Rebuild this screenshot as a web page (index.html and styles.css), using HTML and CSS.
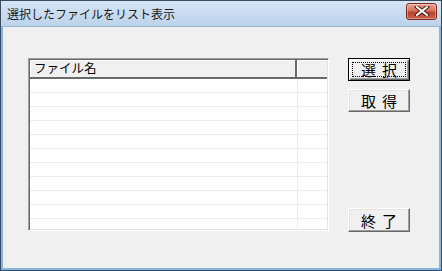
FILE: index.html
```html
<!DOCTYPE html>
<html lang="ja">
<head>
    <meta charset="UTF-8">
    <title>選択したファイルをリスト表示</title>
    <link rel="stylesheet" href="styles.css">
</head>
<body>
    <div class="window">
        <div class="titlebar">
            <span class="title">選択したファイルをリスト表示</span>
            <button class="close" aria-label="閉じる">
                <svg width="16" height="10" viewBox="0 0 16 10">
                    <path d="M3 1 L13 9 M13 1 L3 9" stroke="#4a1a12" stroke-width="4" stroke-linecap="square"/>
                    <path d="M3 1 L13 9 M13 1 L3 9" stroke="#fff" stroke-width="2" stroke-linecap="square"/>
                </svg>
            </button>
        </div>

        <div class="client">
            <div class="list">
                <div class="list-head">
                    <div class="head-cell name">ファイル名</div>
                    <div class="head-cell extra"></div>
                </div>
                <div class="list-body">
                    <div class="row"><div class="cell name"></div><div class="cell extra"></div></div>
                    <div class="row"><div class="cell name"></div><div class="cell extra"></div></div>
                    <div class="row"><div class="cell name"></div><div class="cell extra"></div></div>
                    <div class="row"><div class="cell name"></div><div class="cell extra"></div></div>
                    <div class="row"><div class="cell name"></div><div class="cell extra"></div></div>
                    <div class="row"><div class="cell name"></div><div class="cell extra"></div></div>
                    <div class="row"><div class="cell name"></div><div class="cell extra"></div></div>
                    <div class="row"><div class="cell name"></div><div class="cell extra"></div></div>
                    <div class="row"><div class="cell name"></div><div class="cell extra"></div></div>
                    <div class="row"><div class="cell name"></div><div class="cell extra"></div></div>
                    <div class="row"><div class="cell name"></div><div class="cell extra"></div></div>
                    <div class="row"><div class="cell name"></div><div class="cell extra"></div></div>
                </div>
            </div>

            <div class="buttons">
                <button class="btn default"><span class="label focus"><span>選</span><span>択</span></span></button>
                <button class="btn"><span class="label"><span>取</span><span>得</span></span></button>
                <div class="spacer"></div>
                <button class="btn last"><span class="label"><span>終</span><span>了</span></span></button>
            </div>
        </div>
    </div>
</body>
</html>
```

FILE: styles.css
```css
body {
    margin: 0;
    font-family: "Noto Sans CJK JP", "Noto Sans", sans-serif;
    background: #f0f0f0;
}

.window {
    width: 442px;
    height: 271px;
    box-sizing: border-box;
    border: 1px solid #3a4b60;
    background: #86b5e2;
    padding: 0 2px 2px 2px;
    display: flex;
    flex-direction: column;
}

.titlebar {
    height: 25px;
    flex: none;
    display: flex;
    align-items: center;
    justify-content: space-between;
    margin: 0 -2px;
    padding: 0 4px 0 6px;
    background: linear-gradient(#d6e4f4, #bcd3ec);
    border-bottom: 1px solid #98b4d6;
}

.title {
    font-size: 12px;
    color: #1a1a1a;
}

.close {
    width: 31px;
    height: 17px;
    margin-top: -5px;
    padding: 0;
    border: 1px solid #7c2a1f;
    border-radius: 3px;
    background: linear-gradient(#e8a493, #d5735f 45%, #b8432e 55%, #c9604b);
    box-shadow: inset 0 0 0 1px rgba(255, 255, 255, 0.35);
    display: flex;
    align-items: center;
    justify-content: center;
}

.client {
    flex: 1;
    background: #f0f0f0;
    display: flex;
    padding: 31px 0 0 25px;
}

.list {
    width: 301px;
    height: 173px;
    box-sizing: border-box;
    border: 1px solid;
    border-color: #a0a0a0 #ffffff #ffffff #a0a0a0;
    box-shadow: inset 1px 1px #696969, inset -1px -1px #e3e3e3;
    background: #fff;
    padding: 1px;
    overflow: hidden;
}

.list-head {
    display: flex;
    height: 17px;
    background: #f0f0f0;
    border-bottom: 2px solid #6a6a6a;
}

.head-cell {
    box-sizing: border-box;
    border-right: 2px solid #6a6a6a;
    box-shadow: inset 1px 1px #fff;
    font-size: 12.5px;
    line-height: 16px;
    padding-left: 4px;
    color: #000;
}

.name {
    width: 267px;
}

.head-cell.extra {
    flex: 1;
    border-right: none;
}

.row {
    display: flex;
    height: 13px;
    border-bottom: 1px solid #ececec;
}

.cell.name {
    border-right: 1px solid #ececec;
}

.buttons {
    margin-left: 19px;
    width: 62px;
    height: 174px;
    display: flex;
    flex-direction: column;
}

.btn {
    width: 62px;
    height: 23px;
    flex: none;
    padding: 0;
    font-family: "Noto Sans CJK JP", sans-serif;
    font-size: 15px;
    color: #000;
    background: #f0f0f0;
    border: 1px solid;
    border-color: #fff #696969 #696969 #fff;
    box-shadow: inset -1px -1px #a0a0a0, inset 1px 1px #e3e3e3;
    margin-bottom: 8px;
}

.label {
    display: flex;
    justify-content: center;
    align-items: center;
    gap: 6px;
    height: 100%;
    line-height: 15px;
}

.btn.last {
    height: 24px;
    margin-bottom: 0;
}

.btn.default {
    border: 1px solid #000;
    box-shadow: inset 1px 1px #fff, inset -1px -1px #696969, inset -2px -2px #a0a0a0;
    padding: 3px;
}

.focus {
    box-sizing: border-box;
    border: 1px dotted #000;
}

.spacer {
    flex: 1;
}
```
